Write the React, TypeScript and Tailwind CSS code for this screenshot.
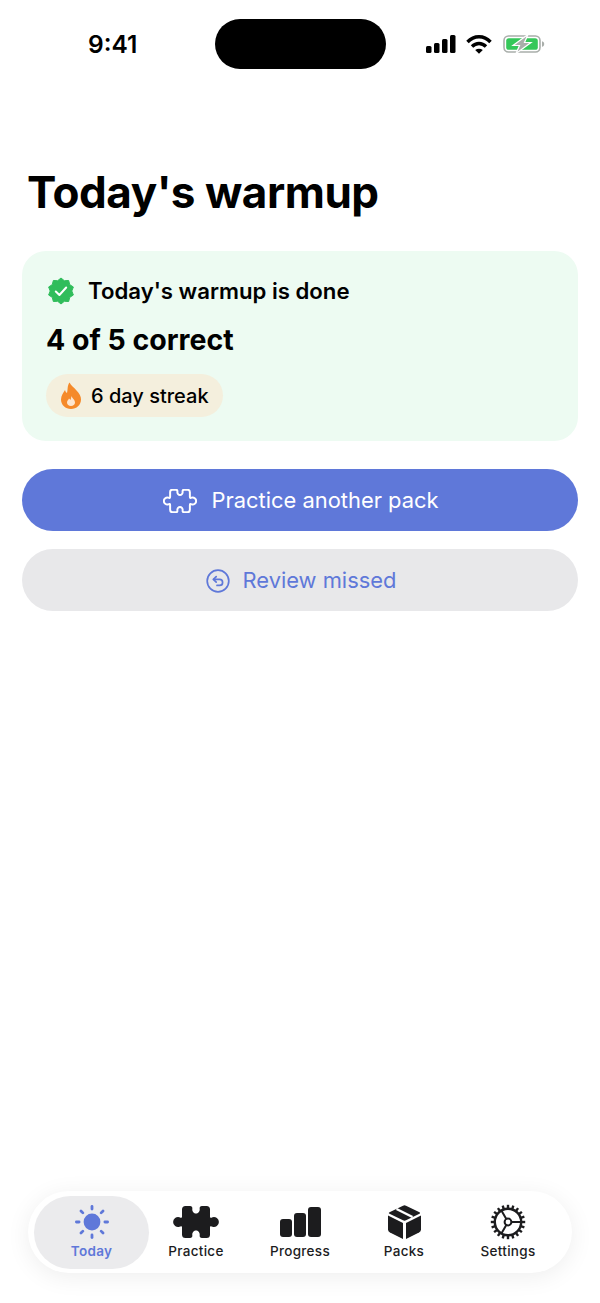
const PUZZLE =
  'M12.5 0H17C19 0 19.6 1.4 19.3 3C19 5.5 21 7.5 23 7.5C25 7.5 27 5.5 26.7 3C26.4 1.4 27 0 29 0H33.5Q37 0 37 3.5V10.5C37 12 38 12 39.5 11.2A5 5 0 1 1 39.5 20.8C38 20 37 20 37 21.5V28.5Q37 32 33.5 32H29C27 32 26.4 30.6 26.7 29C27 26.5 25 24.5 23 24.5C21 24.5 19 26.5 19.3 29C19.6 30.6 19 32 17 32H12.5Q9 32 9 28.5V21.5C9 20 8 20 6.5 20.8A5 5 0 1 1 6.5 11.2C8 12 9 12 9 10.5V3.5Q9 0 12.5 0Z'

function StatusIcons() {
  return (
    <div className="flex items-center gap-[10px]">
      <svg width="30" height="18" viewBox="0 0 30 18" fill="#000">
        <rect x="0" y="11" width="5.5" height="7" rx="1.5" />
        <rect x="8" y="8" width="5.5" height="10" rx="1.5" />
        <rect x="16" y="4" width="5.5" height="14" rx="1.5" />
        <rect x="24" y="0" width="5.5" height="18" rx="1.5" />
      </svg>
      <svg width="26" height="19" viewBox="0 0 26 19" fill="none" stroke="#000" strokeWidth="3.4">
        <path d="M1.5 7C8 0 18 0 24.5 7" />
        <path d="M6 11.5C10 7.5 16 7.5 20 11.5" />
        <path d="M13 18.8L9.2 15C11.5 13.2 14.5 13.2 16.8 15Z" fill="#000" stroke="none" />
      </svg>
      <svg className="ml-px" width="42" height="18" viewBox="0 0 42 18">
        <rect x="1" y="1" width="36" height="16" rx="4.5" fill="none" stroke="#a9aeaa" strokeWidth="1.6" />
        <rect x="3.2" y="3.2" width="31.6" height="11.6" rx="2.6" fill="#35c759" />
        <path d="M39 6.2C40.5 6.6 41.2 7.6 41.2 9S40.5 11.4 39 11.8Z" fill="#a9aeaa" />
        <path d="M25 -0.5L10 10.5H16.5L13 18.5L28 7.5H21.5Z" fill="#a9aeaa" stroke="#ffffff" strokeWidth="1.2" />
      </svg>
    </div>
  )
}

function VerifiedBadge() {
  const pts: string[] = []
  for (let i = 0; i < 20; i++) {
    const r = i % 2 === 0 ? 13 : 10.8
    const a = (i * Math.PI) / 10
    pts.push(`${14 + r * Math.sin(a)},${14 - r * Math.cos(a)}`)
  }
  return (
    <svg width="28" height="28" viewBox="0 0 28 28">
      <polygon points={pts.join(' ')} fill="#30bd5b" stroke="#30bd5b" strokeWidth="1" strokeLinejoin="round" />
      <path d="M8.8 14.5L12.4 18L19.2 10.5" fill="none" stroke="#fff" strokeWidth="2" strokeLinecap="round" strokeLinejoin="round" />
    </svg>
  )
}

function Flame() {
  return (
    <svg width="20" height="27" viewBox="0 0 20 27">
      <path
        d="M8.5 0.5C10 3.5 13.5 6 15.5 8.5C18.5 11.5 20 14.5 20 17.5C20 23 15.5 27 10 27C4.5 27 0 23 0 17.5C0 13.5 2.5 10.5 4 8C4.5 9.5 5 10.5 6 11C7 8 6 4 8.5 0.5Z"
        fill="#f58a2a"
      />
      <path d="M10.5 14C11 16 14 17.5 14 20.5C14 22.8 12.2 24 10 24C7.8 24 6 22.6 6 20.5C6 18.5 7.5 18 8 16.5C8.8 17 9 17.5 9.3 18C10 17 10.2 15.5 10.5 14Z" fill="#fde6cf" />
    </svg>
  )
}

function ReviewIcon() {
  return (
    <svg width="24" height="24" viewBox="0 0 24 24" fill="none" stroke="#5f78d9" strokeWidth="1.7" strokeLinecap="round" strokeLinejoin="round">
      <circle cx="12" cy="12" r="10.8" />
      <path d="M10.2 7.6L7.4 10.4L10.2 13.2" />
      <path d="M7.6 10.4H13.6C15.4 10.4 16.6 11.8 16.6 13.4S15.4 16.4 13.6 16.4H11" />
    </svg>
  )
}

function SunIcon() {
  const rays = [0, 45, 90, 135, 180, 225, 270, 315]
  return (
    <svg width="36" height="36" viewBox="0 0 36 36" fill="#5f78d9">
      <circle cx="18" cy="18" r="8.4" />
      {rays.map((deg) => (
        <rect key={deg} x="16.6" y="1" width="2.8" height="5.5" rx="1.4" transform={`rotate(${deg} 18 18)`} />
      ))}
    </svg>
  )
}

function PuzzleSolid() {
  return (
    <svg width="46" height="32" viewBox="0 0 46 32">
      <path d={PUZZLE} fill="#1c1c1e" />
    </svg>
  )
}

function BarsIcon() {
  return (
    <svg width="41" height="30" viewBox="0 0 41 30" fill="#1c1c1e">
      <rect x="0" y="12" width="12" height="18" rx="3" />
      <rect x="14" y="6" width="12" height="24" rx="3" />
      <rect x="28" y="0" width="13" height="30" rx="3" />
    </svg>
  )
}

function BoxIcon() {
  return (
    <svg width="33" height="34" viewBox="0 0 33 34" fill="#1c1c1e">
      <path d="M15 0.7Q16.5 0 18 0.7L31.5 7.3Q33 8 31.5 8.7L18 15.3Q16.5 16 15 15.3L1.5 8.7Q0 8 1.5 7.3Z" />
      <path d="M8.5 4L24.5 12" stroke="#fff" strokeWidth="2.4" />
      <path d="M0 10.5L15 18V34L2 27.5Q0 26.5 0 24.5Z" />
      <path d="M33 10.5L18 18V34L31 27.5Q33 26.5 33 24.5Z" />
    </svg>
  )
}

function GearIcon() {
  const teeth = Array.from({ length: 20 }, (_, i) => i * 18)
  return (
    <svg width="36" height="36" viewBox="0 0 36 36" fill="none" stroke="#1c1c1e">
      {teeth.map((deg) => (
        <rect key={deg} x="16.8" y="0.8" width="2.4" height="4.5" fill="#1c1c1e" stroke="none" transform={`rotate(${deg} 18 18)`} />
      ))}
      <circle cx="18" cy="18" r="13.2" strokeWidth="2.4" />
      <circle cx="18" cy="18" r="3.4" strokeWidth="2" />
      <path d="M21.4 18H31M16.3 15L11.4 6.6M16.3 21L11.4 29.4" strokeWidth="2" />
    </svg>
  )
}

function TabItem({ label, children }: { label: string; children: React.ReactNode }) {
  return (
    <div className="w-[104px] flex flex-col items-center">
      <div className="h-[36px] flex items-center justify-center">{children}</div>
      <span className="mt-[2px] text-[13.5px] leading-[18px] tracking-[0.3px] font-medium text-[#1c1c1e]">{label}</span>
    </div>
  )
}

export default function App() {
  return (
    <div className="w-[600px] h-[1303px] bg-white flex flex-col font-['Inter',sans-serif] text-black overflow-hidden">
      <div className="h-[88px] pt-[19px] flex items-start">
        <div className="w-[215px] h-[50px] flex items-center pl-[88px]">
          <span className="text-[24.5px] font-semibold leading-none">9:41</span>
        </div>
        <div className="w-[171px] h-[50px] rounded-full bg-black" />
        <div className="h-[50px] pl-[40px] flex items-center">
          <StatusIcons />
        </div>
      </div>

      <h1 className="mt-[74px] ml-[27px] text-[44px] leading-[60px] font-bold tracking-[-0.45px]">Today's warmup</h1>

      <div className="mt-[29px] mx-[22px] h-[190px] rounded-[24px] bg-[#edfbf2] pl-[24px] pt-[26px]">
        <div className="flex items-center gap-[13px] h-[28px] pl-[1px]">
          <VerifiedBadge />
          <span className="text-[22.2px] font-semibold leading-none">Today's warmup is done</span>
        </div>
        <div className="mt-[17px] text-[28.5px] font-bold leading-[36px]">4 of 5 correct</div>
        <div className="mt-[16px] w-[177px] h-[43px] rounded-full bg-[#f4efdd] flex items-center gap-[10px] pl-[15px]">
          <Flame />
          <span className="text-[20px] font-medium leading-none">6 day streak</span>
        </div>
      </div>

      <div className="mt-[28px] mx-[22px] h-[62px] pt-[2px] pl-[1px] rounded-full bg-[#5f78d9] flex items-center justify-center gap-[15px] text-white">
        <svg width="34" height="24" viewBox="-1 -1 48 34">
          <path d={PUZZLE} fill="none" stroke="#fff" strokeWidth="2.8" />
        </svg>
        <span className="text-[21.9px] leading-none">Practice another pack</span>
      </div>

      <div className="mt-[18px] mx-[22px] h-[62px] pt-px pl-[2px] rounded-full bg-[#e8e8ea] flex items-center justify-center gap-[13px] text-[#5f78d9]">
        <ReviewIcon />
        <span className="text-[21.9px] leading-none">Review missed</span>
      </div>

      <div className="mt-auto mb-[30px] mx-[28px] h-[82px] rounded-full bg-white shadow-[0_4px_24px_rgba(0,0,0,0.07)] flex items-center pl-[6px]">
        <div className="w-[115px] h-[73px] rounded-full bg-[#ebebed] flex flex-col items-center pt-[8px]">
          <SunIcon />
          <span className="mt-[2px] text-[13.5px] leading-[18px] tracking-[0.3px] font-semibold text-[#5f78d9]">Today</span>
        </div>
        <div className="-ml-[5px] flex">
          <TabItem label="Practice"><PuzzleSolid /></TabItem>
          <TabItem label="Progress"><BarsIcon /></TabItem>
          <TabItem label="Packs"><BoxIcon /></TabItem>
          <TabItem label="Settings"><GearIcon /></TabItem>
        </div>
      </div>
    </div>
  )
}
